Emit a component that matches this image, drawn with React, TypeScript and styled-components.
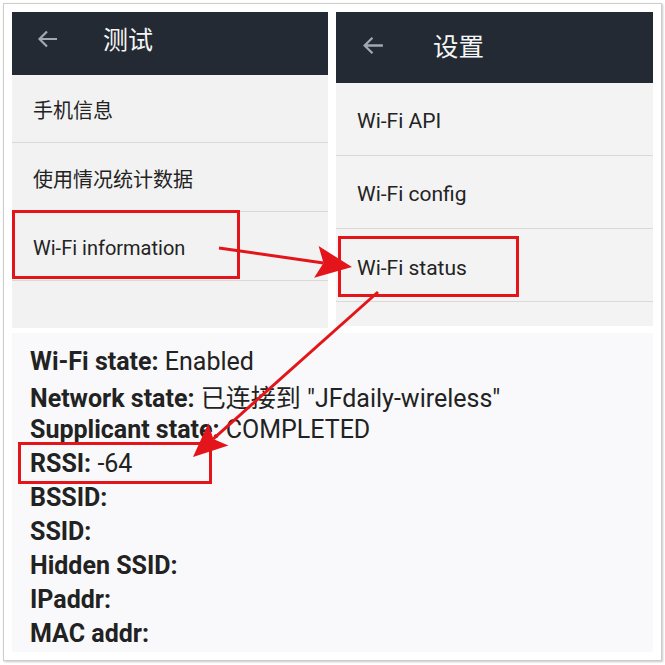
import React from 'react';
import styled, { createGlobalStyle } from 'styled-components';

const Global = createGlobalStyle`
  html, body { margin: 0; padding: 0; background: #ffffff; }
  body { font-family: Roboto, "Noto Sans CJK SC", sans-serif; }
`;

const Page = styled.div`
  position: relative;
  width: 665px;
  height: 665px;
  overflow: hidden;
  background: #ffffff;
`;

const Frame = styled.div`
  box-sizing: border-box;
  margin: 3px;
  width: 659px;
  height: 658px;
  border: 1px solid #cdcdcd;
  box-shadow: 1px 1px 2px rgba(0, 0, 0, 0.22);
  background: #ffffff;
  padding: 8px;
  display: flex;
  flex-direction: column;
  gap: 5px;
`;

const TopRow = styled.div`
  display: flex;
  gap: 8px;
  align-items: flex-start;
`;

const Screen = styled.div<{ $w: number; $h: number; $bg: string }>`
  width: ${(p) => p.$w}px;
  height: ${(p) => p.$h}px;
  background: ${(p) => p.$bg};
  display: flex;
  flex-direction: column;
`;

const AppBar = styled.div<{ $h: number; $pad: number; $gap: number; $lift: number }>`
  height: ${(p) => p.$h}px;
  background: #232a33;
  display: flex;
  align-items: center;
  padding-left: ${(p) => p.$pad}px;
  padding-bottom: ${(p) => p.$lift}px;
  gap: ${(p) => p.$gap}px;
  box-sizing: border-box;
  flex-shrink: 0;
`;

const Title = styled.span<{ $size: number }>`
  color: #f4f5f6;
  font-family: "Noto Sans CJK SC", sans-serif;
  font-size: ${(p) => p.$size}px;
  line-height: 1;
`;

const Row = styled.div<{ $h: number; $pad: number; $size: number; $drop: number }>`
  height: ${(p) => p.$h}px;
  box-sizing: border-box;
  border-bottom: 1px solid #d9d9d9;
  display: flex;
  align-items: center;
  padding-left: ${(p) => p.$pad}px;
  padding-top: ${(p) => p.$drop}px;
  font-size: ${(p) => p.$size}px;
  color: #232323;
  flex-shrink: 0;
`;

const Cjk = styled.span`
  font-family: "Noto Sans CJK SC", sans-serif;
`;

const Status = styled.div`
  height: 319px;
  background: #f9f9fb;
  padding: 12px 0 0 18px;
  box-sizing: border-box;
  display: flex;
  flex-direction: column;
`;

const Line = styled.div`
  height: 34px;
  line-height: 34px;
  font-size: 25px;
  color: #222;
  white-space: nowrap;
`;

const Label = styled.b`
  font-weight: 700;
`;

const Overlay = styled.svg`
  position: absolute;
  left: 0;
  top: 0;
  pointer-events: none;
`;

const BackArrow = ({ size }: { size: number }) => (
  <svg width={size} height={size} viewBox="0 0 24 24" fill="none">
    <path d="M21 12H4M11 4.5L3.5 12L11 19.5" stroke="#a3a8ae" strokeWidth="2.2" />
  </svg>
);

const RED = '#e3151b';

function Arrow({ x1, y1, x2, y2, len, half }: { x1: number; y1: number; x2: number; y2: number; len: number; half: number }) {
  const dx = x2 - x1;
  const dy = y2 - y1;
  const l = Math.hypot(dx, dy);
  const ux = dx / l;
  const uy = dy / l;
  const bx = x2 - ux * len;
  const by = y2 - uy * len;
  const px = -uy;
  const py = ux;
  const nx = x2 - ux * len * 0.8;
  const ny = y2 - uy * len * 0.8;
  const pts = [
    [x2, y2],
    [bx + px * half, by + py * half],
    [nx, ny],
    [bx - px * half, by - py * half],
  ]
    .map((p) => p.map((v) => v.toFixed(1)).join(','))
    .join(' ');
  return (
    <g>
      <line x1={x1} y1={y1} x2={nx} y2={ny} stroke={RED} strokeWidth={3} />
      <polygon points={pts} fill={RED} />
    </g>
  );
}

const statusLines: { label: string; value?: React.ReactNode }[] = [
  { label: 'Wi-Fi state:', value: 'Enabled' },
  { label: 'Network state:', value: <><Cjk>已连接到</Cjk> "JFdaily-wireless"</> },
  { label: 'Supplicant state:', value: 'COMPLETED' },
  { label: 'RSSI:', value: '-64' },
  { label: 'BSSID:' },
  { label: 'SSID:' },
  { label: 'Hidden SSID:' },
  { label: 'IPaddr:' },
  { label: 'MAC addr:' },
];

export default function App() {
  return (
    <Page>
      <Global />
      <Frame>
        <TopRow>
          <Screen $w={316} $h={316} $bg="#f2f2f2">
            <AppBar $h={63} $pad={24} $gap={43} $lift={10}>
              <BackArrow size={24} />
              <Title $size={25}>测试</Title>
            </AppBar>
            <Row $h={68} $pad={21} $size={20} $drop={2}><Cjk>手机信息</Cjk></Row>
            <Row $h={69} $pad={21} $size={20} $drop={2}><Cjk>使用情况统计数据</Cjk></Row>
            <Row $h={69} $pad={21} $size={20} $drop={4}>Wi-Fi information</Row>
          </Screen>
          <Screen $w={317} $h={314} $bg="#f3f3f4">
            <AppBar $h={71} $pad={25} $gap={47} $lift={5}>
              <BackArrow size={25} />
              <Title $size={25.5}>设置</Title>
            </AppBar>
            <Row $h={73} $pad={21} $size={21} $drop={4}>Wi-Fi API</Row>
            <Row $h={73} $pad={21} $size={21} $drop={4}>Wi-Fi config</Row>
            <Row $h={73} $pad={21} $size={21} $drop={5}>Wi-Fi status</Row>
          </Screen>
        </TopRow>
        <Status>
          {statusLines.map((s) => (
            <Line key={s.label}>
              <Label>{s.label}</Label>
              {s.value !== undefined && <> {s.value}</>}
            </Line>
          ))}
        </Status>
      </Frame>
      <Overlay width={665} height={665} viewBox="0 0 665 665">
        <rect x={13.5} y={211.5} width={225} height={66} fill="none" stroke={RED} strokeWidth={3} />
        <rect x={339.5} y={237.5} width={178} height={58} fill="none" stroke={RED} strokeWidth={3} />
        <rect x={19.5} y={443.5} width={191} height={39} fill="none" stroke={RED} strokeWidth={3} />
        <Arrow x1={219} y1={248} x2={352} y2={267} len={36} half={16} />
        <Arrow x1={378} y1={292} x2={193} y2={457} len={34} half={15} />
      </Overlay>
    </Page>
  );
}
